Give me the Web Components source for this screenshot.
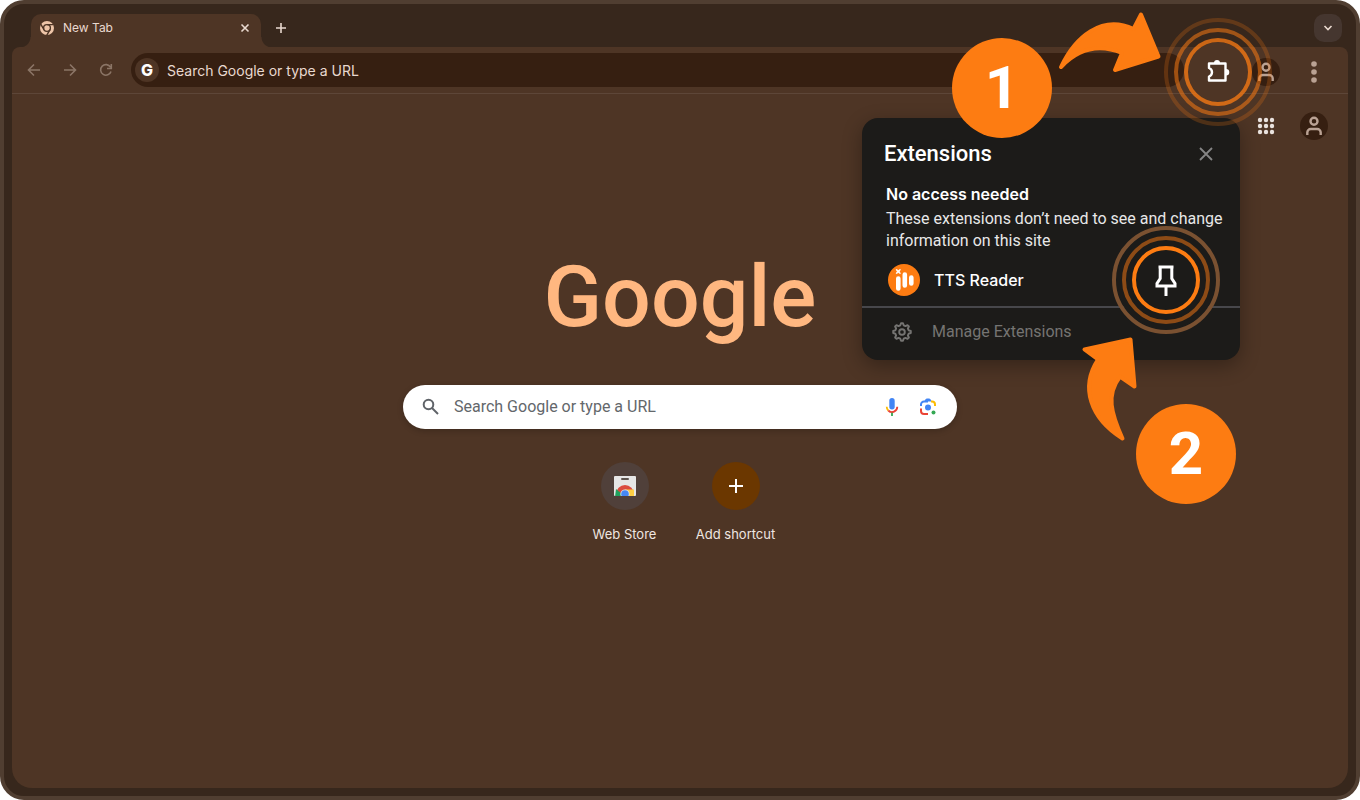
<!DOCTYPE html>
<html lang="en">
<head>
<meta charset="utf-8">
<title>New Tab</title>
<style>
  html, body { height: 100%; margin: 0; }
  body {
    background: #fff;
    font-family: Inter, "Liberation Sans", sans-serif;
    --frame: #37271c;
    --surface: #4e3525;
    --field: #361f11;
    --ink: #e9d9cf;
    --muted: #8b7566;
    --accent: #fd7c12;
    --accent-soft: #ffb780;
    --panel: #1c1b19;
  }
</style>
</head>
<body>
<browser-window>
  <tab-strip slot="tabs">New Tab</tab-strip>
  <tool-bar slot="toolbar"></tool-bar>
  <new-tab-page>
    <short-cut>
      <svg width="24" height="24" viewBox="0 0 24 24" aria-hidden="true">
        <clipPath id="bag"><rect x="1" y="2" width="22" height="20" rx="1"/></clipPath>
        <g clip-path="url(#bag)">
          <rect x="1" y="2" width="22" height="20" fill="#e6e6e6"/>
          <circle cx="12" cy="20" r="9" fill="#db4b3f"/>
          <path d="M3 15L9 20v3H2z" fill="#1fa15d"/>
          <path d="M12 15.5h9V23h-9z" fill="#fdce44"/>
          <circle cx="12" cy="20" r="4.6" fill="#e6e6e6"/>
          <circle cx="12" cy="20" r="3.8" fill="#4688f4"/>
        </g>
        <rect x="8" y="4" width="8" height="2" rx="1" fill="#5c534e"/>
      </svg>
      <span slot="label">Web Store</span>
    </short-cut>
    <short-cut kind="add">
      <svg width="24" height="24" viewBox="0 0 24 24" aria-hidden="true">
        <path d="M12 5v14M5 12h14" stroke="#fff" stroke-width="2"/>
      </svg>
      <span slot="label">Add shortcut</span>
    </short-cut>
  </new-tab-page>
  <extensions-menu slot="overlay">
    <extension-item slot="items">TTS Reader</extension-item>
  </extensions-menu>
  <tour-step slot="overlay" number="1"></tour-step>
  <tour-step slot="overlay" number="2"></tour-step>
</browser-window>

<script>
// Strips the native look from the buttons inside a shadow root.
const buttonReset = `
  *, *::before, *::after { box-sizing: border-box; }
  button {
    display: grid;
    place-items: center;
    margin: 0;
    padding: 0;
    border: 0;
    background: none;
    color: inherit;
    font: inherit;
    cursor: pointer;
  }
  svg { display: block; }
`;

const personIcon = `
  <svg width="28" height="28" viewBox="0 0 28 28" fill="none" stroke="#baa294" stroke-width="2.4" aria-hidden="true">
    <circle cx="14" cy="9.3" r="3.5"/>
    <path d="M7.3 23v-2.5a3.5 3.5 0 0 1 3.5-3.5h6.4a3.5 3.5 0 0 1 3.5 3.5V23"/>
  </svg>
`;

/**
 * Usage: <browser-window> with slots "tabs", "toolbar", "overlay" and the page
 * itself in the default slot.
 */
customElements.define("browser-window", class extends HTMLElement {
  connectedCallback() {
    this.attachShadow({mode: "open"}).innerHTML = `
      <style>
        :host {
          box-sizing: border-box;
          position: relative;
          display: flex;
          flex-direction: column;
          min-height: 100%;
          padding: 10px 8px 8px;
          border: 4px solid #503e31;
          border-radius: 24px;
          background: var(--frame);
          overflow: hidden;
        }
        main {
          flex: 1;
          display: flex;
          flex-direction: column;
          border-radius: 8px 8px 20px 20px;
          background: var(--surface);
        }
      </style>
      <slot name="tabs"></slot>
      <main>
        <slot name="toolbar"></slot>
        <slot></slot>
      </main>
      <slot name="overlay"></slot>
    `;
  }
});

customElements.define("tab-strip", class extends HTMLElement {
  connectedCallback() {
    this.attachShadow({mode: "open"}).innerHTML = `
      <style>
        ${buttonReset}
        :host {
          display: flex;
          align-items: flex-start;
          height: 33px;
          padding: 0 6px 0 19px;
          color: var(--ink);
          font-size: 12px;
          line-height: 28px;
        }
        .tab {
          position: relative;
          display: flex;
          align-items: flex-start;
          width: 230px;
          height: 34px;
          padding: 0 8px;
          border-radius: 10px 10px 0 0;
          background: var(--surface);
        }
        /* The feet of the tab that curve out into the page. */
        .tab::before, .tab::after {
          content: "";
          position: absolute;
          bottom: 0;
          width: 11px;
          height: 11px;
        }
        .tab::before {
          right: 100%;
          background: radial-gradient(circle at 0 0, transparent 10px, var(--surface) 11px);
        }
        .tab::after {
          left: 100%;
          background: radial-gradient(circle at 100% 0, transparent 10px, var(--surface) 11px);
        }
        .tab svg { flex: none; }
        .title { flex: 1; margin-left: 8px; }
        .tab button { width: 16px; height: 28px; }
        .new { width: 28px; height: 28px; margin-left: 6px; }
        .list {
          width: 28px;
          height: 28px;
          margin-left: auto;
          border-radius: 10px;
          background: #45362f;
        }
      </style>
      <div class="tab">
        <svg width="16" height="28" viewBox="0 0 16 28" aria-hidden="true">
          <circle cx="8" cy="14" r="7" fill="#eec5a8"/>
          <g fill="none" stroke="#4e3525" stroke-width="1.4">
            <circle cx="8" cy="14" r="3.4"/>
            <path d="M8 10.6h6.5M5 15.7l-3.3-5.6M11 15.7l-3.3 5.6"/>
          </g>
        </svg>
        <span class="title"><slot></slot></span>
        <button aria-label="Close tab">
          <svg width="10" height="10" viewBox="0 0 10 10" fill="none" stroke="currentColor" stroke-width="1.6">
            <path d="M1.5 1.5l7 7M8.5 1.5l-7 7"/>
          </svg>
        </button>
      </div>
      <button class="new" aria-label="New tab">
        <svg width="12" height="12" viewBox="0 0 12 12" fill="none" stroke="currentColor" stroke-width="1.6">
          <path d="M6 1v10M1 6h10"/>
        </svg>
      </button>
      <button class="list" aria-label="Search tabs">
        <svg width="10" height="8" viewBox="0 0 10 8" fill="none" stroke="currentColor" stroke-width="1.6">
          <path d="M1.5 2L5 5.5 8.5 2"/>
        </svg>
      </button>
    `;
  }
});

customElements.define("tool-bar", class extends HTMLElement {
  connectedCallback() {
    this.attachShadow({mode: "open"}).innerHTML = `
      <style>
        ${buttonReset}
        :host {
          display: flex;
          align-items: center;
          height: 46px;
          padding: 0 20px 0 4px;
          border-bottom: 1px solid #5d4638;
          color: var(--muted);
        }
        button { width: 36px; height: 36px; }
        .address {
          flex: 1;
          display: flex;
          align-items: center;
          gap: 8px;
          height: 34px;
          margin: 0 16px 0 7px;
          padding: 0 4px;
          border-radius: 17px;
          background: var(--field);
        }
        .address b {
          width: 24px;
          border-radius: 12px;
          background: var(--surface);
          color: #fff;
          font-size: 16px;
          font-weight: 800;
          line-height: 24px;
          text-align: center;
        }
        input {
          flex: 1;
          min-width: 0;
          padding: 0;
          border: 0;
          outline: 0;
          background: none;
          font: inherit;
          font-size: 14px;
        }
        input::placeholder { color: var(--ink); opacity: 1; }
        .actions { display: flex; align-items: center; padding-top: 3px; }
        .avatar {
          width: 28px;
          height: 28px;
          margin: 0 20px 0 16px;
          border-radius: 50%;
          background: var(--field);
        }
        .menu { width: 28px; color: #baa294; }
        focus-rings { z-index: 2; }
      </style>
      <button aria-label="Back">
        <svg width="14" height="14" viewBox="0 0 14 14" fill="none" stroke="currentColor" stroke-width="1.6">
          <path d="M13 7H2M7 1.5L1.5 7 7 12.5"/>
        </svg>
      </button>
      <button aria-label="Forward">
        <svg width="14" height="14" viewBox="0 0 14 14" fill="none" stroke="currentColor" stroke-width="1.6">
          <path d="M1 7h11M7 1.5L12.5 7 7 12.5"/>
        </svg>
      </button>
      <button aria-label="Reload">
        <svg width="14" height="14" viewBox="0 0 14 14" fill="none" stroke="currentColor" stroke-width="1.6">
          <path d="M12 8.5A5.3 5.3 0 1 1 11.5 4.2M12.3 1v4.5H8"/>
        </svg>
      </button>
      <label class="address">
        <b aria-hidden="true">G</b>
        <input type="text" aria-label="Address" placeholder="Search Google or type a URL">
      </label>
      <div class="actions">
        <focus-rings>
          <button aria-label="Extensions">
            <svg width="26" height="26" viewBox="0 0 26 26" fill="none" stroke="#fff" stroke-width="2.4" stroke-linejoin="round">
              <path d="M4 4.5h16.5v17H4v-4c4-1.5 4-7 0-8.5z"/>
              <path d="M9 4a3 3 0 0 1 6 0zM21 10a3.3 3.3 0 0 1 0 6.6z" fill="#fff" stroke="none"/>
            </svg>
          </button>
        </focus-rings>
        <button class="avatar" aria-label="Profile">${personIcon}</button>
        <button class="menu" aria-label="Menu">
          <svg width="6" height="22" viewBox="0 0 6 22" fill="currentColor">
            <circle cx="3" cy="3" r="2.8"/><circle cx="3" cy="11" r="2.8"/><circle cx="3" cy="19" r="2.8"/>
          </svg>
        </button>
      </div>
    `;
  }
});

/**
 * Usage: <focus-rings><button>...</button></focus-rings>
 *
 * Draws three rings around its content. With the `solid` attribute they are
 * opaque and hide what lies below them.
 */
customElements.define("focus-rings", class extends HTMLElement {
  connectedCallback() {
    this.attachShadow({mode: "open"}).innerHTML = `
      <style>
        :host {
          position: relative;
          display: grid;
          place-items: center;
          width: 36px;
          height: 36px;
          --ring-1: #fd7c12c0;
          --ring-2: #fd7c1288;
          --ring-3: #fd7c1238;
          --ring-fill: var(--surface);
          --ring-back: none;
        }
        :host([solid]) {
          --ring-1: var(--accent);
          --ring-2: #8d4b16;
          --ring-3: #7a5131;
          --ring-fill: var(--panel);
          --ring-back: var(--panel);
        }
        i {
          position: absolute;
          inset: -16px;
          border: 4px solid var(--ring-1);
          border-radius: 50%;
          background: var(--ring-fill);
          background-clip: padding-box;
          pointer-events: none;
        }
        i:nth-of-type(1) { inset: -36px; border-color: var(--ring-3); background-color: var(--ring-back); }
        i:nth-of-type(2) { inset: -26px; border-color: var(--ring-2); background-color: var(--ring-back); }
        ::slotted(*) { position: relative; }
      </style>
      <i></i><i></i><i></i>
      <slot></slot>
    `;
  }
});

customElements.define("new-tab-page", class extends HTMLElement {
  connectedCallback() {
    this.attachShadow({mode: "open"}).innerHTML = `
      <style>
        ${buttonReset}
        :host {
          flex: 1;
          display: flex;
          flex-direction: column;
          align-items: center;
        }
        nav {
          align-self: flex-end;
          display: flex;
          align-items: center;
          gap: 20px;
          margin: 18px 20px 0 0;
        }
        nav button { width: 28px; height: 28px; border-radius: 50%; }
        .avatar { background: var(--field); }
        h1 {
          margin: 102px 0 0;
          color: var(--accent-soft);
          font: 500 86px/110px Roboto, sans-serif;
        }
        form {
          display: flex;
          align-items: center;
          width: min(554px, 90%);
          height: 44px;
          margin-top: 33px;
          padding: 0 19px 0 18px;
          border-radius: 22px;
          background: #fff;
          box-shadow: 0 2px 6px #0003;
        }
        input {
          flex: 1;
          min-width: 0;
          margin-left: 13px;
          padding: 0;
          border: 0;
          outline: 0;
          font: 400 16px/24px Roboto, sans-serif;
        }
        input::placeholder { color: #63676b; opacity: 1; }
        form button { width: 20px; height: 24px; margin-left: 16px; }
        .shortcuts { display: flex; margin-top: 33px; }
      </style>
      <nav>
        <button aria-label="Google apps">
          <svg width="18" height="18" viewBox="0 0 18 18" fill="#e9e2de">
            <circle cx="3" cy="3" r="2.2"/><circle cx="9" cy="3" r="2.2"/><circle cx="15" cy="3" r="2.2"/>
            <circle cx="3" cy="9" r="2.2"/><circle cx="9" cy="9" r="2.2"/><circle cx="15" cy="9" r="2.2"/>
            <circle cx="3" cy="15" r="2.2"/><circle cx="9" cy="15" r="2.2"/><circle cx="15" cy="15" r="2.2"/>
          </svg>
        </button>
        <button class="avatar" aria-label="Account">${personIcon}</button>
      </nav>
      <h1>Google</h1>
      <form>
        <svg width="20" height="20" viewBox="0 0 20 20" fill="none" stroke="#5f6368" stroke-width="2" aria-hidden="true">
          <circle cx="7.5" cy="7.5" r="4.8"/><path d="M11 11l6 6"/>
        </svg>
        <input type="text" aria-label="Search" placeholder="Search Google or type a URL">
        <button type="button" aria-label="Search by voice">
          <svg width="20" height="20" viewBox="0 0 20 20" fill="none" stroke-width="1.8">
            <rect x="7.3" y="1" width="5.4" height="11.5" rx="2.7" fill="#4285f4"/>
            <path d="M4.7 9.8a5.3 5.3 0 0 0 1.6 3.7" stroke="#fbbc04"/>
            <path d="M6.3 13.5a5.3 5.3 0 0 0 9-3.7" stroke="#ea4335"/>
            <path d="M10 15.8v3.2" stroke="#34a853"/>
          </svg>
        </button>
        <button type="button" aria-label="Search by image">
          <svg width="20" height="20" viewBox="0 0 20 20" fill="none" stroke-width="2">
            <path d="M3 9V7.5a3 3 0 0 1 3-3h4" stroke="#4285f4"/>
            <path d="M7 4l1.3-2h3.4L13 4z" fill="#4285f4" stroke="#4285f4" stroke-width="1"/>
            <path d="M13 4.5h1a3 3 0 0 1 3 3V9" stroke="#fbbc04"/>
            <path d="M3 11.5V14a3 3 0 0 0 3 3h4" stroke="#ea4335"/>
            <circle cx="10" cy="10.5" r="3" fill="#4285f4"/>
            <circle cx="15.5" cy="15.500" r="2" fill="#34a853"/>
          </svg>
        </button>
      </form>
      <div class="shortcuts"><slot></slot></div>
    `;
  }
});

/**
 * Usage: <short-cut kind="add"><svg/><span slot="label">Name</span></short-cut>
 */
customElements.define("short-cut", class extends HTMLElement {
  connectedCallback() {
    this.attachShadow({mode: "open"}).innerHTML = `
      <style>
        :host { display: block; width: 111px; --disc: #50403a; }
        :host([kind="add"]) { --disc: #6b3700; }
        a {
          display: flex;
          flex-direction: column;
          align-items: center;
          gap: 14px;
          color: #eee6e1;
          font-size: 13px;
          line-height: 20px;
          text-decoration: none;
        }
        .disc {
          display: grid;
          place-items: center;
          width: 48px;
          height: 48px;
          border-radius: 50%;
          background: var(--disc);
        }
      </style>
      <a href="#">
        <span class="disc"><slot></slot></span>
        <slot name="label"></slot>
      </a>
    `;
  }
});

customElements.define("extensions-menu", class extends HTMLElement {
  connectedCallback() {
    this.attachShadow({mode: "open"}).innerHTML = `
      <style>
        ${buttonReset}
        :host {
          position: absolute;
          top: 114px;
          right: 116px;
          width: 378px;
          border-radius: 16px;
          background: var(--panel);
          color: #fff;
          box-shadow: 0 6px 20px #00000050;
        }
        header {
          display: flex;
          align-items: center;
          justify-content: space-between;
          padding: 22px 24px 0 22px;
        }
        header button { width: 20px; height: 28px; }
        h2 { margin: 0; font: 500 22px/28px Roboto, sans-serif; }
        section { padding: 12px 12px 10px 24px; }
        h3 { margin: 0; font-size: 16px; font-weight: 600; line-height: 28px; }
        p { margin: 0 0 12px; color: #e8e8e8; font: 400 16px/22px Roboto, sans-serif; }
        footer { padding: 0 30px 4px; border-top: 2px solid #47474b; }
        a {
          display: flex;
          align-items: center;
          gap: 20px;
          color: #757472;
          font: 400 16px/48px Roboto, sans-serif;
          text-decoration: none;
        }
      </style>
      <header>
        <h2>Extensions</h2>
        <button aria-label="Close">
          <svg width="14" height="14" viewBox="0 0 14 14" fill="none" stroke="#858585" stroke-width="1.8">
            <path d="M1 1l12 12M13 1L1 13"/>
          </svg>
        </button>
      </header>
      <section>
        <h3>No access needed</h3>
        <p>These extensions don’t need to see and change information on this site</p>
        <slot name="items"></slot>
      </section>
      <footer>
        <a href="#">
          <svg width="20" height="20" viewBox="0 0 20 20" fill="none" stroke="currentColor" stroke-width="1.9" stroke-linejoin="round" aria-hidden="true">
            <path d="M8.3 3.3L9 1.2h2l.7 2.1 1.8.8 2-1 1.4 1.4-1 2 .8 1.8 2.1.7v2l-2.1.7-.8 1.8 1 2-1.4 1.4-2-1-1.8.8-.7 2.1H9l-.7-2.1-1.8-.8-2 1-1.4-1.4 1-2-.8-1.8L1.2 11V9l2.1-.7.8-1.8-1-2 1.4-1.4 2 1z"/>
            <circle cx="10" cy="10" r="2.8"/>
          </svg>
          Manage Extensions
        </a>
      </footer>
    `;
  }
});

customElements.define("extension-item", class extends HTMLElement {
  connectedCallback() {
    this.attachShadow({mode: "open"}).innerHTML = `
      <style>
        ${buttonReset}
        :host {
          display: flex;
          align-items: center;
          gap: 14px;
          height: 32px;
          padding: 0 44px 0 2px;
          font-size: 16px;
          font-weight: 500;
        }
        focus-rings { margin-left: auto; }
        button { width: 36px; height: 36px; }
      </style>
      <svg width="32" height="32" viewBox="0 0 32 32" aria-hidden="true">
        <circle cx="16" cy="16" r="16" fill="#fd7c12"/>
        <g stroke="#fff" stroke-width="4.6" stroke-linecap="round">
          <path d="M10.3 14.5v10M16.8 10.5v11M23.3 13.5v6"/>
        </g>
        <path d="M8.3 5.5l2 1 2-1-1 2 1 2-2-1-2 1 1-2z" fill="#fff" stroke="#fff"/>
      </svg>
      <slot></slot>
      <focus-rings solid>
        <button aria-label="Pin">
          <svg width="24" height="32" viewBox="0 0 24 32" fill="none" stroke="#fff" stroke-width="3">
            <path d="M4.5 3h15M6.2 3v11.5L3 19.5V22h18v-2.5l-3.2-5V3M12 22v10"/>
          </svg>
        </button>
      </focus-rings>
    `;
  }
});

/**
 * Usage: <tour-step number="1"></tour-step>
 *
 * A numbered badge with an arrow to the control that the step is about.
 */
customElements.define("tour-step", class extends HTMLElement {
  connectedCallback() {
    const number = this.getAttribute("number");
    const arrows = {
      1: "M5 57C19 27 46 4 77.5 19L85 4.5 102.5 46.5 59 60 66 43C44 34 23 38 5 57z",
      2: "M4.5 15.5L50.5 5.5 54.5 52.5 40 42.5C26 61 31 79 42.5 104.5 10 84 0 53 18 25.5z",
    };
    this.attachShadow({mode: "open"}).innerHTML = `
      <style>
        :host { position: absolute; z-index: 3; pointer-events: none; }
        :host([number="1"]) { top: 34px; right: 304px; }
        :host([number="2"]) { top: 400px; right: 120px; }
        .badge {
          width: 100px;
          border-radius: 50%;
          background: var(--accent);
          color: #fff;
          font: 700 60px/100px Roboto, sans-serif;
          text-align: center;
        }
        svg {
          position: absolute;
          overflow: visible;
          fill: var(--accent);
          stroke: var(--accent);
          stroke-width: 4px;
          stroke-linejoin: round;
        }
        :host([number="1"]) svg { left: 104px; top: -28px; }
        :host([number="2"]) svg { left: -56px; top: -70px; }
      </style>
      <div class="badge">${number}</div>
      <svg width="106" height="110" viewBox="0 0 106 110" aria-hidden="true"><path d="${arrows[number]}"/></svg>
    `;
  }
});
</script>
</body>
</html>
